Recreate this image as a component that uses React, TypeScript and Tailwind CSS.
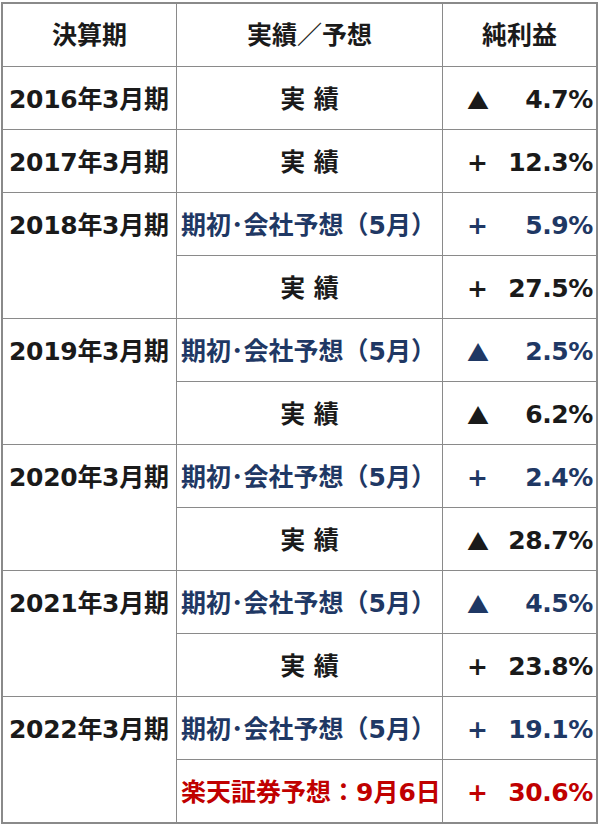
import React from 'react';

type Tone = 'black' | 'blue' | 'red';

type Row = {
  period?: string;
  kind: string;
  tone: Tone;
  sign: string;
  value: string;
};

const rows: Row[] = [
  { period: '2016年3月期', kind: '実 績', tone: 'black', sign: '▲', value: '4.7%' },
  { period: '2017年3月期', kind: '実 績', tone: 'black', sign: '+', value: '12.3%' },
  { period: '2018年3月期', kind: '期初･会社予想（5月）', tone: 'blue', sign: '+', value: '5.9%' },
  { kind: '実 績', tone: 'black', sign: '+', value: '27.5%' },
  { period: '2019年3月期', kind: '期初･会社予想（5月）', tone: 'blue', sign: '▲', value: '2.5%' },
  { kind: '実 績', tone: 'black', sign: '▲', value: '6.2%' },
  { period: '2020年3月期', kind: '期初･会社予想（5月）', tone: 'blue', sign: '+', value: '2.4%' },
  { kind: '実 績', tone: 'black', sign: '▲', value: '28.7%' },
  { period: '2021年3月期', kind: '期初･会社予想（5月）', tone: 'blue', sign: '▲', value: '4.5%' },
  { kind: '実 績', tone: 'black', sign: '+', value: '23.8%' },
  { period: '2022年3月期', kind: '期初･会社予想（5月）', tone: 'blue', sign: '+', value: '19.1%' },
  { kind: '楽天証券予想：9月6日', tone: 'red', sign: '+', value: '30.6%' },
];

const toneClass: Record<Tone, string> = {
  black: 'text-[#1a1a1a]',
  blue: 'text-[#1f3864]',
  red: 'text-[#c00000]',
};

const App = () => {
  return (
    <div className="min-h-screen bg-white font-['DejaVu_Sans','Noto_Sans_CJK_JP',sans-serif] font-bold text-[25px] text-[#1a1a1a]">
      <div className="ml-[1px] mt-[2px] inline-block bg-[#8a8a8a] p-[2px]">
        <div className="grid grid-cols-[173px_265px_153px] auto-rows-[62px] gap-px">
          {/* Header */}
          <div className="bg-white flex items-center justify-center pt-[2px]">決算期</div>
          <div className="bg-white flex items-center justify-center pt-[2px]">実績／予想</div>
          <div className="bg-white flex items-center justify-center pt-[2px]">純利益</div>

          {rows.map((row, i) => {
            const spans = row.period && rows[i + 1] && !rows[i + 1].period;
            const isActual = row.kind === '実 績';
            return (
              <React.Fragment key={i}>
                {row.period && (
                  <div className={`bg-white ${spans ? 'row-span-2' : ''}`}>
                    <div className="h-[62px] flex items-center pl-[6px] pt-[3px] tracking-[-0.3px]">{row.period}</div>
                  </div>
                )}
                <div
                  className={`bg-white flex items-center pt-[3px] whitespace-nowrap ${toneClass[row.tone]} ${
                    isActual ? 'justify-center' : 'pl-[4px]'
                  }`}
                >
                  {row.kind}
                </div>
                <div className={`bg-white flex items-center justify-between pl-[24px] pr-[3px] pt-[3px] ${toneClass[row.tone]}`}>
                  <span className={row.sign === '▲' ? "font-['Noto_Sans_CJK_JP'] text-[22px]" : ''}>{row.sign}</span>
                  <span className="tracking-[-0.4px]">{row.value}</span>
                </div>
              </React.Fragment>
            );
          })}
        </div>
      </div>
    </div>
  );
};

export default App;
